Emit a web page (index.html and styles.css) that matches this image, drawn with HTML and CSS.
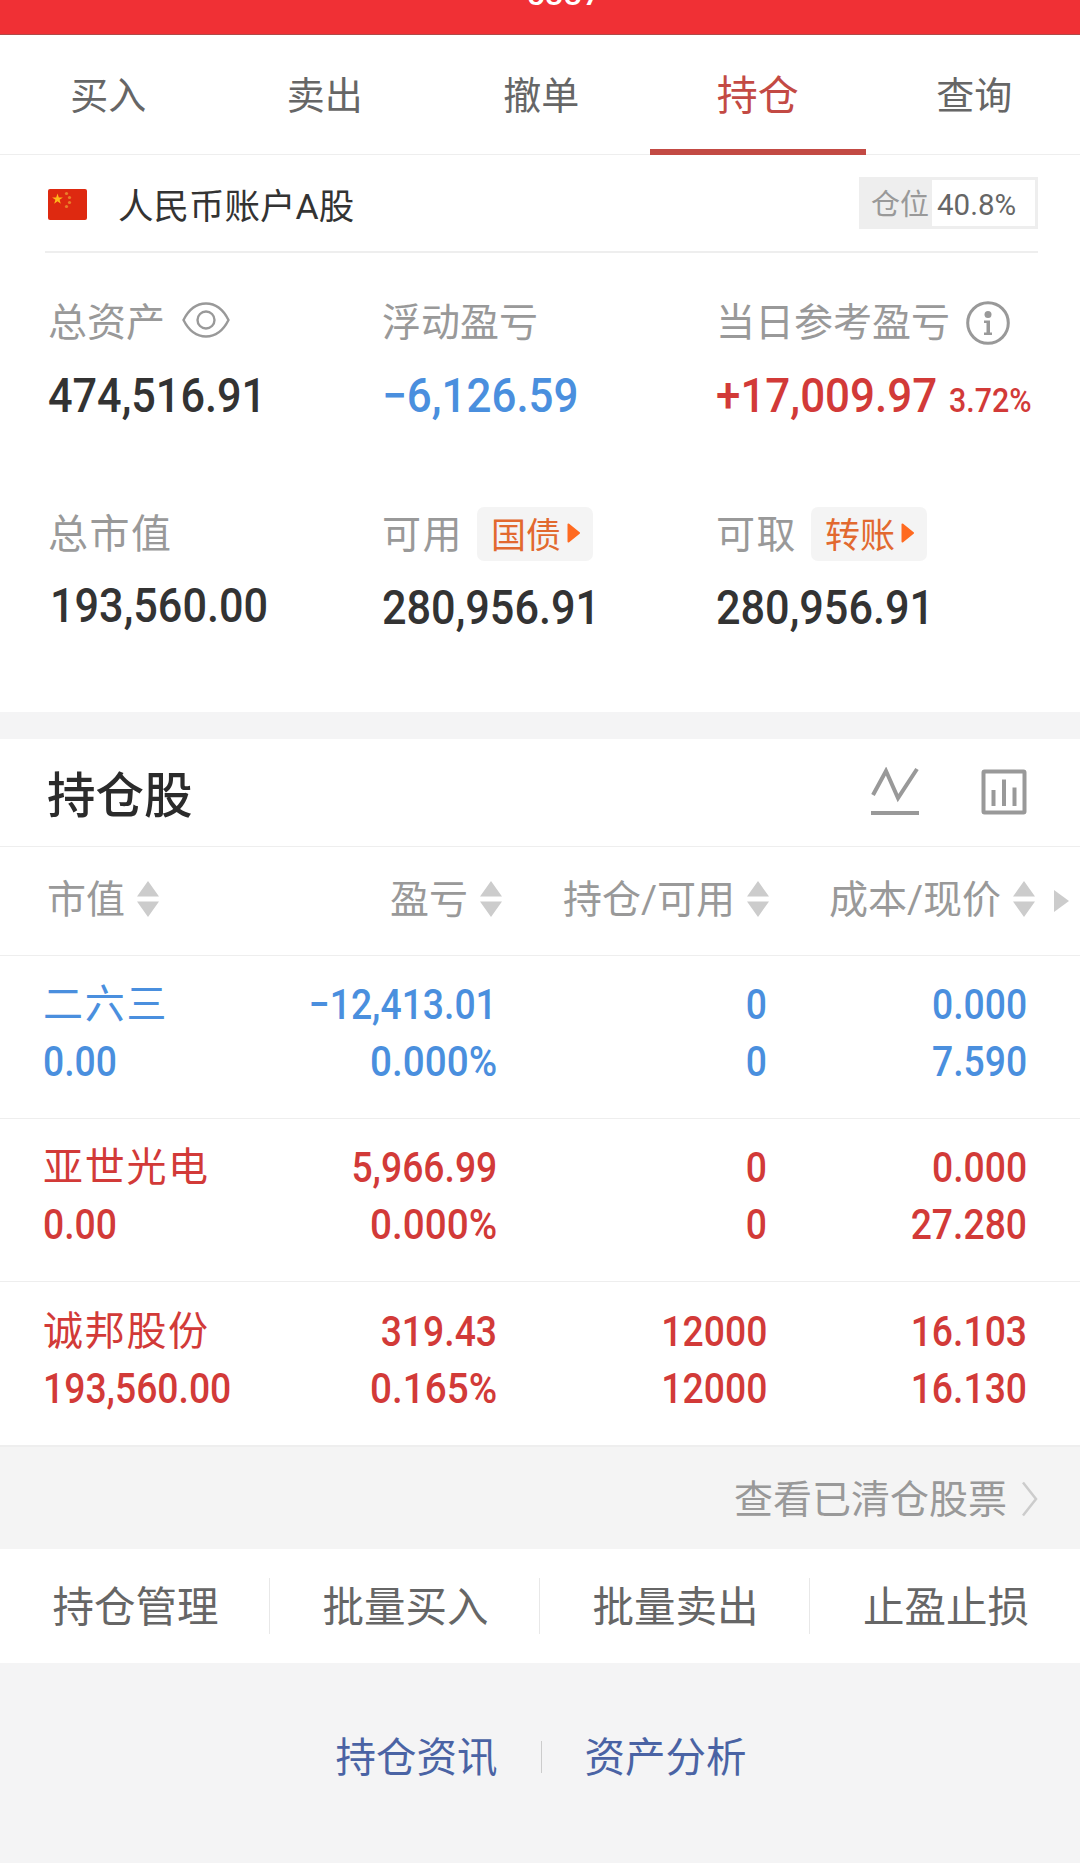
FILE: index.html
```
<!DOCTYPE html>
<html lang="zh-CN">
<head>
    <meta charset="UTF-8">
    <meta name="viewport" content="width=device-width, initial-scale=1.0">
    <title>持仓</title>
    <link rel="stylesheet" href="styles.css">
</head>
<body>
    <header class="topbar"><span class="topbar-text">5337</span></header>

    <nav class="tabs">
        <a class="tab">买入</a>
        <a class="tab">卖出</a>
        <a class="tab">撤单</a>
        <a class="tab active">持仓</a>
        <a class="tab">查询</a>
    </nav>

    <section class="account">
        <svg class="flag" viewBox="0 0 39 31">
            <rect width="39" height="31" rx="2" fill="#de2910"/>
            <polygon fill="#ffb81a" points="9.5,4.5 10.8,8.4 14.9,8.4 11.6,10.8 12.8,14.7 9.5,12.3 6.2,14.7 7.4,10.8 4.1,8.4 8.2,8.4"/>
            <g fill="#e8802a">
                <circle cx="18.5" cy="4.5" r="1.6"/>
                <circle cx="21.5" cy="8.5" r="1.6"/>
                <circle cx="21.5" cy="13.5" r="1.6"/>
                <circle cx="18.5" cy="17.5" r="1.6"/>
            </g>
        </svg>
        <span class="account-name">人民币账户A股</span>
        <div class="position">
            <span class="position-label">仓位</span>
            <span class="position-value">40.8%</span>
        </div>
    </section>

    <section class="summary">
        <div class="item">
            <div class="label">总资产
                <svg class="eye" viewBox="0 0 48 36" fill="none" stroke="#999" stroke-width="2.4">
                    <path d="M1.5 18C7 7 15 1.5 24 1.5S41 7 46.5 18C41 29 33 34.5 24 34.5S7 29 1.5 18Z"/>
                    <circle cx="24" cy="18" r="8.5"/>
                </svg>
            </div>
            <div class="value"><span class="num">474,516.91</span></div>
        </div>
        <div class="item">
            <div class="label">浮动盈亏</div>
            <div class="value blue"><span class="num pnl">−6,126.59</span></div>
        </div>
        <div class="item">
            <div class="label">当日参考盈亏
                <svg class="info" viewBox="0 0 44 44">
                    <circle cx="22" cy="22" r="20.3" fill="none" stroke="#999" stroke-width="3"/>
                    <circle cx="22" cy="13.5" r="3.5" fill="#999"/>
                    <path d="M18 19.5H24V31.5H26V34H18V31.5H20.5V22H18Z" fill="#999"/>
                </svg>
            </div>
            <div class="value red"><span class="num pnl">+17,009.97</span><span class="num rate">3.72%</span></div>
        </div>
        <div class="item">
            <div class="label wide">总市值</div>
            <div class="value market"><span class="num">193,560.00</span></div>
        </div>
        <div class="item">
            <div class="label short">可用
                <span class="chip">国债<svg class="play" viewBox="0 0 13 20"><path d="M1.5 1.5V18.5L12 10Z"/></svg></span>
            </div>
            <div class="value"><span class="num">280,956.91</span></div>
        </div>
        <div class="item">
            <div class="label short">可取
                <span class="chip">转账<svg class="play" viewBox="0 0 13 20"><path d="M1.5 1.5V18.5L12 10Z"/></svg></span>
            </div>
            <div class="value"><span class="num">280,956.91</span></div>
        </div>
    </section>

    <section class="holdings">
        <div class="title-row">
            <h2>持仓股</h2>
            <svg class="icon-line" viewBox="0 0 48 49" fill="none" stroke="#999" stroke-width="4">
                <path d="M2 28L15 4L27 31L46 2"/>
                <path d="M0 46H48"/>
            </svg>
            <svg class="icon-bar" viewBox="0 0 46 46" fill="none" stroke="#999" stroke-width="4">
                <rect x="2.5" y="2.5" width="41" height="41" rx="1"/>
                <path d="M12.5 21V37M23 10.5V37M33.5 18.5V37"/>
            </svg>
        </div>

        <div class="row head">
            <div class="cell">市值<svg class="sort" viewBox="0 0 22 36"><path d="M11 0L22 15.5H0ZM0 20.5H22L11 36Z"/></svg></div>
            <div class="cell">盈亏<svg class="sort" viewBox="0 0 22 36"><path d="M11 0L22 15.5H0ZM0 20.5H22L11 36Z"/></svg></div>
            <div class="cell">持仓/可用<svg class="sort" viewBox="0 0 22 36"><path d="M11 0L22 15.5H0ZM0 20.5H22L11 36Z"/></svg></div>
            <div class="cell">成本/现价<svg class="sort" viewBox="0 0 22 36"><path d="M11 0L22 15.5H0ZM0 20.5H22L11 36Z"/></svg></div>
            <svg class="more" viewBox="0 0 15 22"><path d="M0 0V22L15 11Z"/></svg>
        </div>

        <div class="row stock blue">
            <div class="cell"><span class="name">二六三</span><span class="num">0.00</span></div>
            <div class="cell"><span class="num">−12,413.01</span><span class="num percent">0.000%</span></div>
            <div class="cell"><span class="num">0</span><span class="num">0</span></div>
            <div class="cell"><span class="num">0.000</span><span class="num">7.590</span></div>
        </div>
        <div class="row stock red">
            <div class="cell"><span class="name">亚世光电</span><span class="num">0.00</span></div>
            <div class="cell"><span class="num">5,966.99</span><span class="num percent">0.000%</span></div>
            <div class="cell"><span class="num">0</span><span class="num">0</span></div>
            <div class="cell"><span class="num">0.000</span><span class="num">27.280</span></div>
        </div>
        <div class="row stock red">
            <div class="cell"><span class="name">诚邦股份</span><span class="num">193,560.00</span></div>
            <div class="cell"><span class="num">319.43</span><span class="num percent">0.165%</span></div>
            <div class="cell"><span class="num">12000</span><span class="num">12000</span></div>
            <div class="cell"><span class="num">16.103</span><span class="num">16.130</span></div>
        </div>
    </section>

    <div class="cleared">查看已清仓股票
        <svg class="chevron" viewBox="0 0 17 36"><path d="M2 1.5L15 18L2 34.5" fill="none" stroke="#ccc" stroke-width="2.5"/></svg>
    </div>

    <div class="actions">
        <a class="action">持仓管理</a>
        <a class="action">批量买入</a>
        <a class="action">批量卖出</a>
        <a class="action">止盈止损</a>
    </div>

    <footer class="links">
        <a>持仓资讯</a>
        <span class="sep"></span>
        <a>资产分析</a>
    </footer>
</body>
</html>
```
FILE: styles.css
```
* {
    box-sizing: border-box;
}

body {
    margin: 0;
    height: 1863px;
    overflow: hidden;
    background-color: #f4f4f5;
    color: #666;
    font-family: Roboto, "Noto Sans CJK SC", sans-serif;
    font-weight: 400;
}

svg {
    display: block;
    flex: none;
}

.topbar {
    display: flex;
    justify-content: center;
    align-items: flex-end;
    height: 35px;
    padding: 0 0 22px 48px;
    overflow: hidden;
    background-color: #f03035;
    border-bottom: 1px solid #b04a48;
    color: white;
}

.topbar-text {
    font-size: 32px;
    line-height: 36px;
    letter-spacing: 0.5px;
    font-weight: 500;
}

.tabs {
    display: flex;
    height: 120px;
    background-color: white;
    border-bottom: 1px solid #eee;
}

.tab {
    flex: none;
    width: 216.5px;
    height: 120px;
    line-height: 123px;
    text-align: center;
    font-size: 38px;
}

.tab.active {
    font-size: 41px;
    color: #c34a44;
    border-bottom: 6px solid #c34a44;
}

.account {
    display: flex;
    align-items: center;
    height: 98px;
    padding: 0 42px 0 48px;
    background: linear-gradient(#eee, #eee) 45px 96px / 993px 2px no-repeat white;
}

.flag {
    width: 39px;
    height: 31px;
}

.account-name {
    margin-left: 31px;
    padding-bottom: 2px;
    font-size: 35.5px;
    color: #333;
}

.position {
    display: flex;
    width: 179px;
    height: 52px;
    margin: 0 0 2px auto;
    border: 3px solid #eee;
    line-height: 50px;
    font-size: 29px;
}

.position-label {
    width: 70px;
    height: 46px;
    padding-left: 9px;
    background-color: #eee;
    color: #999;
}

.position-value {
    padding-left: 5px;
    font-size: 29.5px;
    line-height: 51px;
}

.summary {
    display: grid;
    grid-template-columns: 334px 334px 1fr;
    grid-template-rows: 212px 1fr;
    height: 459px;
    padding: 39px 0 0 48px;
    background-color: white;
}

.label {
    display: flex;
    align-items: center;
    height: 58px;
    padding-bottom: 5px;
    font-size: 39px;
    color: #999;
}

.label.wide {
    font-size: 40px;
    letter-spacing: 1.5px;
}

.label.short {
    letter-spacing: 1.5px;
}

.eye {
    width: 48px;
    height: 36px;
    margin: 2px 0 0 17px;
}

.info {
    width: 44px;
    height: 44px;
    margin: 8px 0 0 16px;
}

.value {
    display: flex;
    align-items: baseline;
    margin-top: 20px;
    line-height: 52px;
    font-size: 48px;
    color: #333;
}

.value.market {
    margin-top: 18px;
    padding-left: 2px;
}

/* DIN-like figures: slightly narrowed */
.num {
    display: block;
    font-family: Roboto, sans-serif;
    font-weight: 500;
    transform: scaleX(0.9);
    transform-origin: left;
}

.num.pnl {
    transform: scaleX(0.915);
}

.num.rate {
    margin-left: -9px;
    font-size: 33px;
    transform: scaleX(0.92);
}

.blue, .value.blue {
    color: #4a8fde;
}

.red, .value.red {
    color: #d23a38;
}

.chip {
    display: flex;
    align-items: center;
    height: 54px;
    width: 116px;
    margin: 6px 0 0 14px;
    padding: 0 0 2px 14px;
    border-radius: 7px;
    background-color: #f4f4f4;
    color: #e2692f;
    font-size: 35px;
    letter-spacing: 0;
}

.play {
    width: 13px;
    height: 20px;
    margin: 1px 0 0 6px;
    fill: #ff6a20;
    stroke: #ff6a20;
    stroke-width: 2;
    stroke-linejoin: round;
}

.holdings {
    margin-top: 27px;
    background-color: white;
}

.title-row {
    display: flex;
    align-items: center;
    height: 108px;
    padding: 0 53px 2px 47px;
    border-bottom: 1px solid #eee;
}

h2 {
    margin: 0 auto 0 0;
    font-size: 48.5px;
    font-weight: 500;
    color: #2b2b2b;
}

.icon-line {
    width: 48px;
    height: 49px;
    margin-right: 62px;
}

.icon-bar {
    width: 46px;
    height: 46px;
}

.row {
    display: grid;
    grid-template-columns: 250px 209px 267px 266px 1fr;
    padding-left: 43px;
    border-bottom: 1px solid #eee;
}

.head {
    align-items: center;
    height: 109px;
    padding-bottom: 10px;
    font-size: 39px;
    color: #999;
}

.head .cell {
    display: flex;
    align-items: center;
    justify-content: flex-end;
    white-space: nowrap;
}

.head .cell:first-child {
    justify-content: flex-start;
    padding-left: 4px;
}

.sort {
    width: 22px;
    height: 36px;
    margin: 6px 0 0 12px;
    fill: #ccc;
}

.more {
    width: 15px;
    height: 22px;
    margin: 9px 0 0 19px;
    fill: #ccc;
}

.stock {
    height: 163px;
    padding-top: 20px;
    font-size: 42px;
    line-height: 57px;
}

.stock:last-child {
    padding-top: 21px;
    border-bottom: none;
}

.stock .cell {
    display: flex;
    flex-direction: column;
    align-items: flex-end;
    padding-right: 8px;
}

.stock .cell:first-child {
    align-items: flex-start;
}

.stock .cell:nth-child(2) {
    padding-right: 5px;
}

.stock .cell:nth-child(3) {
    padding-right: 2px;
}

.stock .num {
    transform: scaleX(0.888);
}

.stock .cell + .cell .num {
    transform-origin: right;
}

.stock .num.percent {
    transform: scaleX(0.92);
}

.name {
    font-size: 40px;
    letter-spacing: 1.7px;
    white-space: nowrap;
}

.cleared {
    display: flex;
    align-items: center;
    justify-content: flex-end;
    height: 104px;
    padding: 0 42px 5px 0;
    border-top: 2px solid #eee;
    background-color: #f4f4f4;
    font-size: 39px;
    color: #999;
}

.chevron {
    width: 17px;
    height: 36px;
    margin: 6px 0 0 14px;
}

.actions {
    display: flex;
    align-items: center;
    height: 114px;
    background-color: white;
}

.action {
    width: 270px;
    height: 56px;
    padding-left: 2px;
    line-height: 59px;
    text-align: center;
    font-size: 41.5px;
    border-right: 1px solid #e8e8e8;
}

.action:last-child {
    border-right: none;
}

.links {
    display: flex;
    align-items: center;
    justify-content: center;
    height: 183px;
    padding-left: 2px;
    font-size: 40.5px;
    color: #4a63a4;
}

.sep {
    width: 1px;
    height: 32px;
    margin: 4px 43px 0;
    background-color: #ccc;
}
```
